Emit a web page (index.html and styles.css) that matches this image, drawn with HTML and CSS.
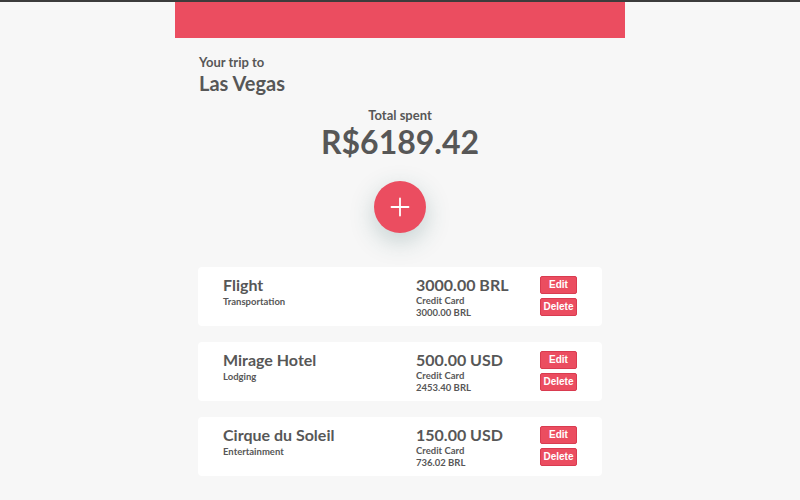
FILE: index.html
```html
<!DOCTYPE html>
<html>
<head>
<meta charset="utf-8">
<link rel="stylesheet" href="styles.css">
</head>
<body>
<div class="topline"></div>
<main class="app">
  <header class="banner"></header>
  <section class="content">
    <div class="trip">
      <div class="trip-label">Your trip to</div>
      <div class="trip-name">Las Vegas</div>
    </div>
    <div class="total">
      <div class="total-label">Total spent</div>
      <div class="total-value">R$6189.42</div>
    </div>
    <div class="add-wrap">
      <button class="add-btn" aria-label="Add">
        <svg width="20" height="20" viewBox="0 0 20 20"><path d="M10 1.5v17M1.5 10h17" stroke="#fff" stroke-width="1.8" stroke-linecap="round"/></svg>
      </button>
    </div>
    <div class="list">
      <div class="card">
        <div class="info">
          <div class="name">Flight</div>
          <div class="cat">Transportation</div>
        </div>
        <div class="amount">
          <div class="value">3000.00 BRL</div>
          <div class="meta">Credit Card</div>
          <div class="meta">3000.00 BRL</div>
        </div>
        <div class="actions">
          <button class="btn">Edit</button>
          <button class="btn">Delete</button>
        </div>
      </div>
      <div class="card">
        <div class="info">
          <div class="name">Mirage Hotel</div>
          <div class="cat">Lodging</div>
        </div>
        <div class="amount">
          <div class="value">500.00 USD</div>
          <div class="meta">Credit Card</div>
          <div class="meta">2453.40 BRL</div>
        </div>
        <div class="actions">
          <button class="btn">Edit</button>
          <button class="btn">Delete</button>
        </div>
      </div>
      <div class="card">
        <div class="info">
          <div class="name">Cirque du Soleil</div>
          <div class="cat">Entertainment</div>
        </div>
        <div class="amount">
          <div class="value">150.00 USD</div>
          <div class="meta">Credit Card</div>
          <div class="meta">736.02 BRL</div>
        </div>
        <div class="actions">
          <button class="btn">Edit</button>
          <button class="btn">Delete</button>
        </div>
      </div>
    </div>
  </section>
</main>
</body>
</html>
```
FILE: styles.css
```css
* { box-sizing: border-box; }
html, body { margin: 0; padding: 0; }
body {
  background: #f7f7f7;
  font-family: "Lato", "Noto Sans", sans-serif;
  color: #575757;
  height: 500px;
  overflow: hidden;
}
.topline { height: 2px; background: #3c3c3c; }
.app { width: 450px; margin: 0 auto; }
.banner { height: 36px; background: #eb4d60; }
.content { padding: 0 23px; }
.trip { padding: 16px 0 0 1px; }
.trip-label { font-size: 13px; font-weight: 700; line-height: 16px; }
.trip-name { font-size: 20px; font-weight: 700; line-height: 24px; margin-top: 1px; }
.total { text-align: center; margin-top: 12px; }
.total-label { font-size: 13px; font-weight: 700; line-height: 16px; }
.total-value { font-size: 32px; font-weight: 700; line-height: 36px; margin-top: 1px; }
.add-wrap { display: flex; justify-content: center; margin-top: 21px; }
.add-btn {
  width: 52px; height: 52px; border-radius: 50%; border: none;
  background: #eb4d60; display: flex; align-items: center; justify-content: center;
  box-shadow: 0 8px 24px rgba(40, 90, 90, 0.25);
  padding: 0;
}
.list { display: flex; flex-direction: column; gap: 16px; margin-top: 34px; }
.card {
  background: #fff; border-radius: 4px; height: 59px;
  display: grid; grid-template-columns: 1fr 124px auto;
  align-items: start; padding: 9px 25px 0 25px;
}
.info { margin-top: -1px; }
.name { font-size: 16px; font-weight: 700; line-height: 20px; }
.cat { font-size: 9.5px; font-weight: 700; line-height: 12px; margin-top: 1px; }
.amount { margin-top: -1px; }
.value { font-size: 16px; font-weight: 700; line-height: 20px; }
.meta { font-size: 9.5px; font-weight: 700; line-height: 12px; }
.amount .meta:first-of-type { margin-top: 1px; }
.actions { display: flex; flex-direction: column; gap: 4px; }
.btn {
  width: 37px; height: 18px; border: 1px solid #d93b50; border-radius: 2px;
  background: #eb4d60; color: #fff; font-family: "Liberation Sans", Arial, sans-serif;
  font-size: 10px; font-weight: 700; padding: 0; line-height: 16px;
}
```
